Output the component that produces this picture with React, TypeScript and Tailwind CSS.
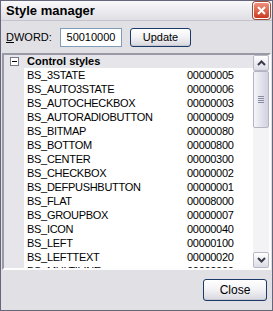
import React from "react";

const styles: [string, string][] = [
  ["BS_3STATE", "00000005"],
  ["BS_AUTO3STATE", "00000006"],
  ["BS_AUTOCHECKBOX", "00000003"],
  ["BS_AUTORADIOBUTTON", "00000009"],
  ["BS_BITMAP", "00000080"],
  ["BS_BOTTOM", "00000800"],
  ["BS_CENTER", "00000300"],
  ["BS_CHECKBOX", "00000002"],
  ["BS_DEFPUSHBUTTON", "00000001"],
  ["BS_FLAT", "00008000"],
  ["BS_GROUPBOX", "00000007"],
  ["BS_ICON", "00000040"],
  ["BS_LEFT", "00000100"],
  ["BS_LEFTTEXT", "00000020"],
  ["BS_MULTILINE", "00002000"],
];

function XpButton({ label, className }: { label: string; className: string }) {
  return (
    <button
      type="button"
      className={`flex items-center justify-center rounded-[3px] border border-[#1c3a6a] bg-gradient-to-b from-white via-[#f2f2f5] to-[#d6d6de] text-[11px] text-black shadow-[inset_0_-1px_0_#c8c8d2] ${className}`}
    >
      {label}
    </button>
  );
}

function ScrollButton({ up }: { up: boolean }) {
  return (
    <div className="flex h-[16px] w-[16px] items-center justify-center rounded-[2px] border border-[#b9b9c6] bg-gradient-to-b from-white to-[#dcdce6]">
      <svg width="9" height="6" viewBox="0 0 9 6">
        <path
          d={up ? "M1 5 L4.5 1.5 L8 5" : "M1 1 L4.5 4.5 L8 1"}
          fill="none"
          stroke="#3a3a4a"
          strokeWidth="2"
        />
      </svg>
    </div>
  );
}

export default function App() {
  return (
    <div className="flex h-[311px] w-[273px] flex-col border border-[#66667a] bg-[#e1e0e5] font-['Liberation_Sans',Arial,sans-serif] text-black">
      <div className="flex h-[20px] items-center justify-between border-b border-[#c4c4cc] bg-gradient-to-b from-[#fafafc] to-[#dedee4] pl-[5px] pr-[2px]">
        <span className="text-[13px] font-bold leading-none">Style manager</span>
        <div className="flex h-[17px] w-[17px] items-center justify-center rounded-[3px] border border-white bg-gradient-to-b from-[#ee8f7a] to-[#c9381e] shadow-[0_0_0_1px_#a04a3a]">
          <svg width="9" height="9" viewBox="0 0 9 9">
            <path d="M1 1 L8 8 M8 1 L1 8" stroke="white" strokeWidth="2" />
          </svg>
        </div>
      </div>

      <div className="flex h-[32px] items-center pl-[5px]">
        <span className="w-[54px] text-[11px]">
          <span className="underline">D</span>WORD:
        </span>
        <div className="flex h-[19px] w-[62px] items-center justify-center border border-[#7f9db9] bg-white text-[11px]">
          50010000
        </div>
        <XpButton label="Update" className="ml-[8px] h-[19px] w-[61px]" />
      </div>

      <div className="mx-[1px] flex h-[217px] border-2 border-t-[#9a9aa6] border-l-[#9a9aa6] border-r-[#fdfdfd] border-b-[#fdfdfd] bg-[#e6e6ea]">
        <div className="flex min-w-0 flex-1 flex-col overflow-hidden text-[11px] tracking-[-0.3px]">
          <div className="flex h-[13px] shrink-0 items-center">
            <div className="flex w-[20px] justify-center">
              <div className="flex h-[9px] w-[9px] items-center justify-center border border-[#7a7a86] bg-white">
                <div className="h-[1px] w-[5px] bg-black" />
              </div>
            </div>
            <span className="pl-[3px] font-bold tracking-normal">Control styles</span>
          </div>
          {styles.map(([name, value]) => (
            <div key={name} className="flex h-[14px] shrink-0 items-center">
              <div className="w-[20px] self-stretch" />
              <div className="flex flex-1 items-center self-stretch bg-white pl-[3px]">
                <span className="w-[160px]">{name}</span>
                <span>{value}</span>
              </div>
            </div>
          ))}
        </div>
        <div className="flex w-[16px] flex-col bg-[#f3f3f6]">
          <ScrollButton up />
          <div className="flex h-[57px] items-center justify-center rounded-[2px] border border-[#b4b4c4] bg-gradient-to-r from-[#f4f4fa] to-[#d2d2e0]">
            <div className="flex flex-col gap-[1px]">
              <div className="h-[1px] w-[6px] bg-[#8c8ca0]" />
              <div className="h-[1px] w-[6px] bg-[#8c8ca0]" />
              <div className="h-[1px] w-[6px] bg-[#8c8ca0]" />
              <div className="h-[1px] w-[6px] bg-[#8c8ca0]" />
            </div>
          </div>
          <div className="flex-1" />
          <ScrollButton up={false} />
        </div>
      </div>

      <div className="flex flex-1 items-center justify-end pr-[5px]">
        <XpButton label="Close" className="h-[22px] w-[64px] text-[12px]" />
      </div>
    </div>
  );
}
